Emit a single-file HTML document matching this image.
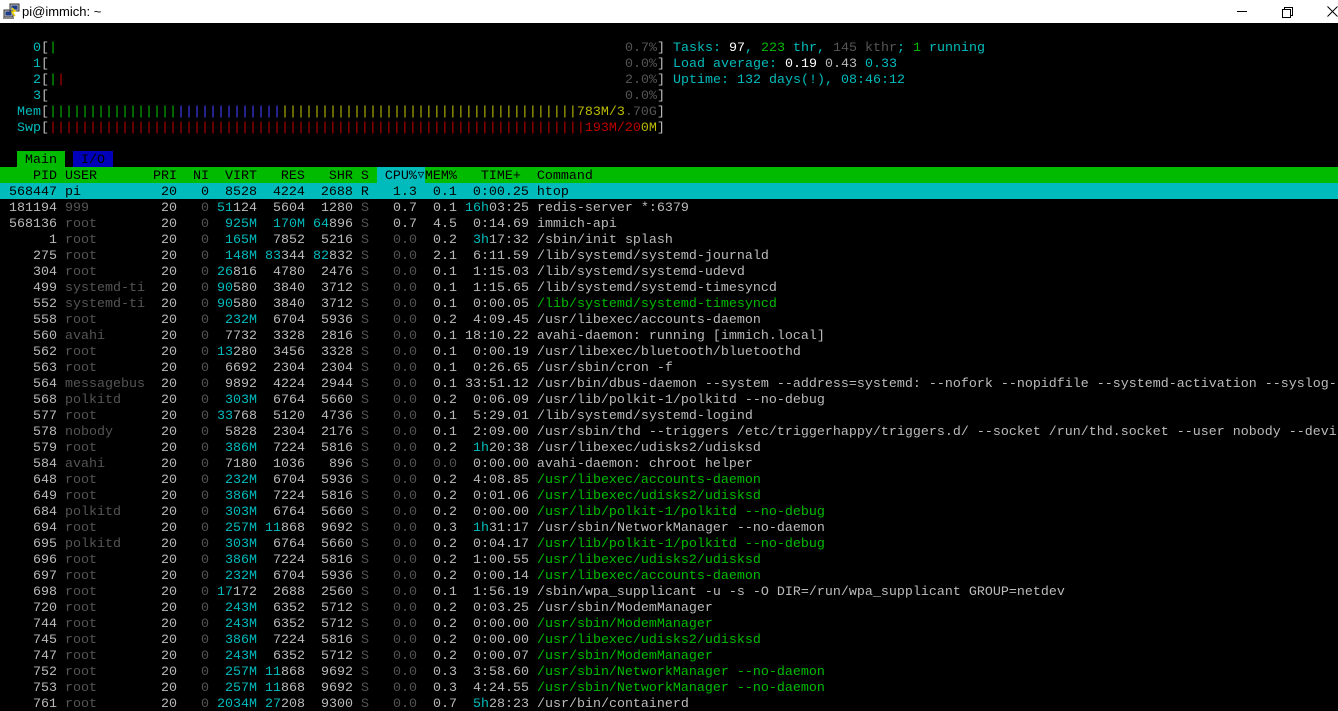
<!DOCTYPE html>
<html><head><meta charset="utf-8"><style>
html,body{margin:0;padding:0;background:#000;width:1338px;height:704px;overflow:hidden}
#tb{position:absolute;left:0;top:0;width:1338px;height:23px;background:#fff;font:13px "Liberation Sans",sans-serif;color:#000}
#tb .t{position:absolute;left:22px;top:4px}
#term{position:absolute;left:0;top:23px;width:1338px;font-family:"Liberation Mono","DejaVu Sans Mono",monospace;font-size:13.33px;color:#bbb}
.r{position:relative;height:14px;padding-top:2px;line-height:16px;white-space:pre;padding-left:1px;overflow:hidden}
.g{color:#555}.c{color:#00bbbb}.n{color:#00bb00}.w{color:#fff}.b{color:#4040ff}.y{color:#bbbb00}.rd{color:#bb0000}
.rt{position:absolute;left:625px;top:2px}
.hdr{background:#00bb00;color:#000}
.hc{background:#00bbbb;display:inline-block;height:16px;margin-top:-2px;padding-top:2px;vertical-align:top;line-height:16px}
.tri{display:inline-block;width:8px;height:14px;overflow:hidden;vertical-align:top;font-size:11px;line-height:15px;text-align:center}
.sel{background:#00bbbb;color:#000}
.tm{background:#00bb00;color:#000}.ti{background:#0000bb;color:#000}
.tab .tm,.tab .ti{display:inline-block;height:16px;margin-top:-2px;padding-top:2px;vertical-align:top;line-height:15px}
</style></head><body>
<div id="tb">
<svg style="position:absolute;left:3px;top:2px" width="18" height="18" viewBox="0 0 18 18"><rect x="1" y="8" width="9" height="7" fill="#bbb" stroke="#333"/><rect x="2.5" y="9.5" width="6" height="4" fill="#1a3a8a"/><rect x="7" y="2" width="9" height="7" fill="#bbb" stroke="#333"/><rect x="8.5" y="3.5" width="6" height="4" fill="#1a3a8a"/><path d="M9 6 L12 9 L9 10 L12 14" stroke="#e8d000" stroke-width="1.6" fill="none"/><rect x="0" y="15" width="11" height="2" fill="#888"/></svg>
<span class="t">pi@immich: ~</span>
<div style="position:absolute;left:1237px;top:11px;width:10px;height:1px;background:#000"></div>
<div style="position:absolute;left:1284px;top:7px;width:7px;height:7px;border:1px solid #000"></div>
<div style="position:absolute;left:1282px;top:9px;width:7px;height:7px;border:1px solid #000;background:#fff"></div>
<svg style="position:absolute;left:1327px;top:6px" width="11" height="11"><path d="M0.5 0.5 L10.5 10.5 M10.5 0.5 L0.5 10.5" stroke="#000" stroke-width="1"/></svg>
</div>
<div id="term">
<div class="r"> </div>
<div class="r">    <span class="c">0</span>[<span class="n">|</span><span class="rt"><span class="g">0.7%</span>] <span class="c">Tasks: </span><span class="w">97</span><span class="c">, </span><span class="n">223</span><span class="c"> thr, </span><span class="g">145 kthr</span><span class="c">; </span><span class="n">1</span><span class="c"> running</span></span></div>
<div class="r">    <span class="c">1</span>[<span class="rt"><span class="g">0.0%</span>] <span class="c">Load average: </span><span class="w">0.19 </span>0.43 <span class="c">0.33</span></span></div>
<div class="r">    <span class="c">2</span>[<span class="n">|</span><span class="rd">|</span><span class="rt"><span class="g">2.0%</span>] <span class="c">Uptime: 132 days(!), 08:46:12</span></span></div>
<div class="r">    <span class="c">3</span>[<span class="rt"><span class="g">0.0%</span>]</span></div>
<div class="r">  <span class="c">Mem</span>[<span class="n">||||||||||||||||</span><span class="b">|||||||||||||</span><span class="y">|||||||||||||||||||||||||||||||||||||783M/3</span><span class="g">.70G</span>]</div>
<div class="r">  <span class="c">Swp</span>[<span class="rd">|||||||||||||||||||||||||||||||||||||||||||||||||||||||||||||||||||193M/20</span><span class="y">0M</span>]</div>
<div class="r"> </div>
<div class="r tab">  <span class="tm"> Main </span> <span class="ti"> I/O </span></div>
<div class="r hdr">    PID USER       PRI  NI  VIRT   RES   SHR S <span class="hc"> CPU%<span class="tri">▽</span></span>MEM%   TIME+  Command</div>
<div class="r sel"> 568447 pi          20   0  8528  4224  2688 R   1.3  0.1  0:00.25 htop</div>
<div class="r"> 181194 <span class="g">999       </span>  20   <span class="g">0</span> <span class="c">51</span>124  5604  1280 <span class="g">S</span>   0.7  0.1 <span class="c">16h</span>03:25 redis-server *:6379</div>
<div class="r"> 568136 <span class="g">root      </span>  20   <span class="g">0</span>  <span class="c">925M</span>  <span class="c">170M</span> <span class="c">64</span>896 <span class="g">S</span>   0.7  4.5  0:14.69 immich-api</div>
<div class="r">      1 <span class="g">root      </span>  20   <span class="g">0</span>  <span class="c">165M</span>  7852  5216 <span class="g">S</span>   <span class="g">0.0</span>  0.2  <span class="c">3h</span>17:32 /sbin/init splash</div>
<div class="r">    275 <span class="g">root      </span>  20   <span class="g">0</span>  <span class="c">148M</span> <span class="c">83</span>344 <span class="c">82</span>832 <span class="g">S</span>   <span class="g">0.0</span>  2.1  6:11.59 /lib/systemd/systemd-journald</div>
<div class="r">    304 <span class="g">root      </span>  20   <span class="g">0</span> <span class="c">26</span>816  4780  2476 <span class="g">S</span>   <span class="g">0.0</span>  0.1  1:15.03 /lib/systemd/systemd-udevd</div>
<div class="r">    499 <span class="g">systemd-ti</span>  20   <span class="g">0</span> <span class="c">90</span>580  3840  3712 <span class="g">S</span>   <span class="g">0.0</span>  0.1  1:15.65 /lib/systemd/systemd-timesyncd</div>
<div class="r">    552 <span class="g">systemd-ti</span>  20   <span class="g">0</span> <span class="c">90</span>580  3840  3712 <span class="g">S</span>   <span class="g">0.0</span>  0.1  0:00.05 <span class="n">/lib/systemd/systemd-timesyncd</span></div>
<div class="r">    558 <span class="g">root      </span>  20   <span class="g">0</span>  <span class="c">232M</span>  6704  5936 <span class="g">S</span>   <span class="g">0.0</span>  0.2  4:09.45 /usr/libexec/accounts-daemon</div>
<div class="r">    560 <span class="g">avahi     </span>  20   <span class="g">0</span>  7732  3328  2816 <span class="g">S</span>   <span class="g">0.0</span>  0.1 18:10.22 avahi-daemon: running [immich.local]</div>
<div class="r">    562 <span class="g">root      </span>  20   <span class="g">0</span> <span class="c">13</span>280  3456  3328 <span class="g">S</span>   <span class="g">0.0</span>  0.1  0:00.19 /usr/libexec/bluetooth/bluetoothd</div>
<div class="r">    563 <span class="g">root      </span>  20   <span class="g">0</span>  6692  2304  2304 <span class="g">S</span>   <span class="g">0.0</span>  0.1  0:26.65 /usr/sbin/cron -f</div>
<div class="r">    564 <span class="g">messagebus</span>  20   <span class="g">0</span>  9892  4224  2944 <span class="g">S</span>   <span class="g">0.0</span>  0.1 33:51.12 /usr/bin/dbus-daemon --system --address=systemd: --nofork --nopidfile --systemd-activation --syslog-</div>
<div class="r">    568 <span class="g">polkitd   </span>  20   <span class="g">0</span>  <span class="c">303M</span>  6764  5660 <span class="g">S</span>   <span class="g">0.0</span>  0.2  0:06.09 /usr/lib/polkit-1/polkitd --no-debug</div>
<div class="r">    577 <span class="g">root      </span>  20   <span class="g">0</span> <span class="c">33</span>768  5120  4736 <span class="g">S</span>   <span class="g">0.0</span>  0.1  5:29.01 /lib/systemd/systemd-logind</div>
<div class="r">    578 <span class="g">nobody    </span>  20   <span class="g">0</span>  5828  2304  2176 <span class="g">S</span>   <span class="g">0.0</span>  0.1  2:09.00 /usr/sbin/thd --triggers /etc/triggerhappy/triggers.d/ --socket /run/thd.socket --user nobody --devi</div>
<div class="r">    579 <span class="g">root      </span>  20   <span class="g">0</span>  <span class="c">386M</span>  7224  5816 <span class="g">S</span>   <span class="g">0.0</span>  0.2  <span class="c">1h</span>20:38 /usr/libexec/udisks2/udisksd</div>
<div class="r">    584 <span class="g">avahi     </span>  20   <span class="g">0</span>  7180  1036   896 <span class="g">S</span>   <span class="g">0.0</span>  <span class="g">0.0</span>  0:00.00 avahi-daemon: chroot helper</div>
<div class="r">    648 <span class="g">root      </span>  20   <span class="g">0</span>  <span class="c">232M</span>  6704  5936 <span class="g">S</span>   <span class="g">0.0</span>  0.2  4:08.85 <span class="n">/usr/libexec/accounts-daemon</span></div>
<div class="r">    649 <span class="g">root      </span>  20   <span class="g">0</span>  <span class="c">386M</span>  7224  5816 <span class="g">S</span>   <span class="g">0.0</span>  0.2  0:01.06 <span class="n">/usr/libexec/udisks2/udisksd</span></div>
<div class="r">    684 <span class="g">polkitd   </span>  20   <span class="g">0</span>  <span class="c">303M</span>  6764  5660 <span class="g">S</span>   <span class="g">0.0</span>  0.2  0:00.00 <span class="n">/usr/lib/polkit-1/polkitd --no-debug</span></div>
<div class="r">    694 <span class="g">root      </span>  20   <span class="g">0</span>  <span class="c">257M</span> <span class="c">11</span>868  9692 <span class="g">S</span>   <span class="g">0.0</span>  0.3  <span class="c">1h</span>31:17 /usr/sbin/NetworkManager --no-daemon</div>
<div class="r">    695 <span class="g">polkitd   </span>  20   <span class="g">0</span>  <span class="c">303M</span>  6764  5660 <span class="g">S</span>   <span class="g">0.0</span>  0.2  0:04.17 <span class="n">/usr/lib/polkit-1/polkitd --no-debug</span></div>
<div class="r">    696 <span class="g">root      </span>  20   <span class="g">0</span>  <span class="c">386M</span>  7224  5816 <span class="g">S</span>   <span class="g">0.0</span>  0.2  1:00.55 <span class="n">/usr/libexec/udisks2/udisksd</span></div>
<div class="r">    697 <span class="g">root      </span>  20   <span class="g">0</span>  <span class="c">232M</span>  6704  5936 <span class="g">S</span>   <span class="g">0.0</span>  0.2  0:00.14 <span class="n">/usr/libexec/accounts-daemon</span></div>
<div class="r">    698 <span class="g">root      </span>  20   <span class="g">0</span> <span class="c">17</span>172  2688  2560 <span class="g">S</span>   <span class="g">0.0</span>  0.1  1:56.19 /sbin/wpa_supplicant -u -s -O DIR=/run/wpa_supplicant GROUP=netdev</div>
<div class="r">    720 <span class="g">root      </span>  20   <span class="g">0</span>  <span class="c">243M</span>  6352  5712 <span class="g">S</span>   <span class="g">0.0</span>  0.2  0:03.25 /usr/sbin/ModemManager</div>
<div class="r">    744 <span class="g">root      </span>  20   <span class="g">0</span>  <span class="c">243M</span>  6352  5712 <span class="g">S</span>   <span class="g">0.0</span>  0.2  0:00.00 <span class="n">/usr/sbin/ModemManager</span></div>
<div class="r">    745 <span class="g">root      </span>  20   <span class="g">0</span>  <span class="c">386M</span>  7224  5816 <span class="g">S</span>   <span class="g">0.0</span>  0.2  0:00.00 <span class="n">/usr/libexec/udisks2/udisksd</span></div>
<div class="r">    747 <span class="g">root      </span>  20   <span class="g">0</span>  <span class="c">243M</span>  6352  5712 <span class="g">S</span>   <span class="g">0.0</span>  0.2  0:00.07 <span class="n">/usr/sbin/ModemManager</span></div>
<div class="r">    752 <span class="g">root      </span>  20   <span class="g">0</span>  <span class="c">257M</span> <span class="c">11</span>868  9692 <span class="g">S</span>   <span class="g">0.0</span>  0.3  3:58.60 <span class="n">/usr/sbin/NetworkManager --no-daemon</span></div>
<div class="r">    753 <span class="g">root      </span>  20   <span class="g">0</span>  <span class="c">257M</span> <span class="c">11</span>868  9692 <span class="g">S</span>   <span class="g">0.0</span>  0.3  4:24.55 <span class="n">/usr/sbin/NetworkManager --no-daemon</span></div>
<div class="r">    761 <span class="g">root      </span>  20   <span class="g">0</span> <span class="c">2034M</span> <span class="c">27</span>208  9300 <span class="g">S</span>   <span class="g">0.0</span>  0.7  <span class="c">5h</span>28:23 /usr/bin/containerd</div>
</div>
</body></html>
